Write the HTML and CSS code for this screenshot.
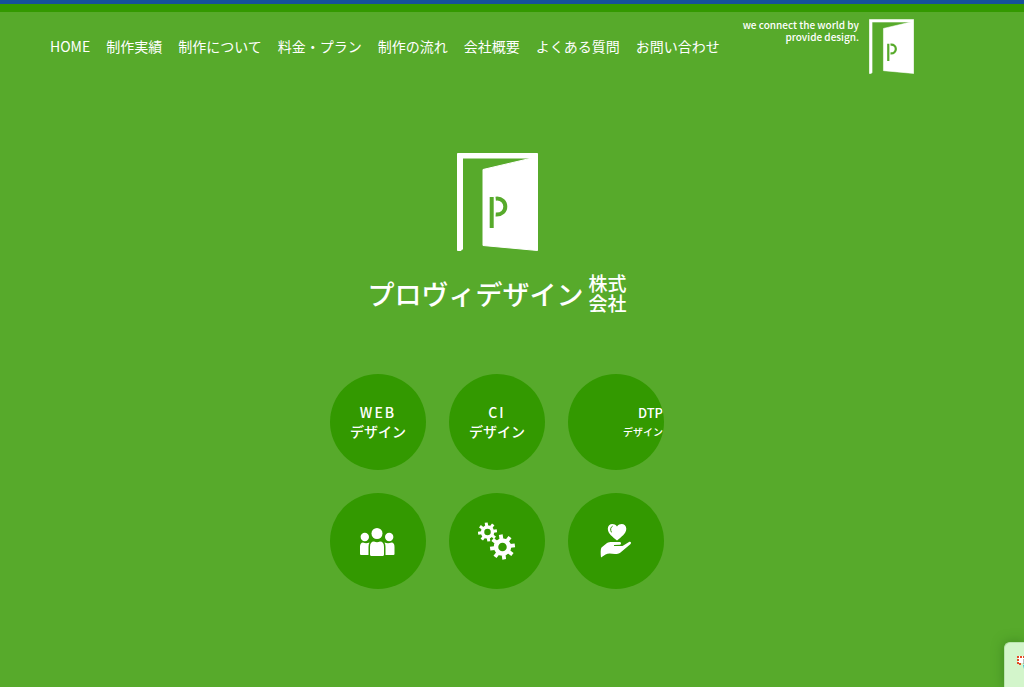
FILE: index.html
```html
<!DOCTYPE html>
<html lang="ja">
<head>
<meta charset="utf-8">
<meta name="viewport" content="width=device-width, initial-scale=1">
<title>プロヴィデザイン株式会社</title>
<link rel="stylesheet" href="styles.css">
</head>
<body>
<svg class="defs" aria-hidden="true">
  <symbol id="door" viewBox="0 0 81 98">
    <path fill="#fff" stroke="#fff" stroke-linejoin="round" d="M.5.5H80.500V97.500L26 92.500V16.500L75 5H5.500V96L4 97.500H.5Z"/>
    <path class="handle" d="M34.700 44V75M38.700 45.700C45 45 48.300 49 48.300 53.500S45 62 38.700 61.500"/>
  </symbol>
</svg>
<header class="header">
  <nav class="nav" aria-label="メイン">
    <a href="#home">HOME</a>
    <a href="#works">制作実績</a>
    <a href="#about">制作について</a>
    <a href="#price">料金・プラン</a>
    <a href="#flow">制作の流れ</a>
    <a href="#company">会社概要</a>
    <a href="#faq">よくある質問</a>
    <a href="#contact">お問い合わせ</a>
  </nav>
  <div class="brand">
    <p class="tagline">we connect the world by<br>provide design.</p>
    <svg class="brand-mark" aria-hidden="true"><use href="#door"/></svg>
  </div>
</header>
<main class="hero">
  <svg class="hero-mark" aria-hidden="true"><use href="#door"/></svg>
  <h1 class="wordmark"><span>プロヴィデザイン</span><small><span>株式</span><span>会社</span></small></h1>
  <div class="services">
    <a class="circle" href="#web"><span class="latin">WEB</span><span>デザイン</span></a>
    <a class="circle" href="#ci"><span class="latin">CI</span><span>デザイン</span></a>
    <a class="circle sliding" href="#dtp"><span>DTP</span><span class="sliding-label">デザイン</span></a>
    <a class="circle" href="#team" aria-label="チーム">
      <svg class="icon" viewBox="0 0 48 48" fill="#fff" aria-hidden="true">
        <circle cx="23" cy="16.500" r="5.500"/><circle cx="10.800" cy="20" r="4.200"/><circle cx="35.200" cy="20" r="4.200"/>
        <path d="M16 37.500V30Q16 24.500 20 24.500Q23 26 26 24.500Q30 24.500 30 30V37.500Q30 39 28.500 39H17.500Q16 39 16 37.500ZM6 37V30Q6 25.500 9 25.500Q12 27 15.500 25.500Q14.500 27 14.500 30V38H7Q6 38 6 37ZM40.500 37V30Q40.500 25.500 37.500 25.500Q34 27 30.500 25.500Q31.500 27 31.500 30V38H39.500Q40.500 38 40.500 37Z"/>
      </svg>
    </a>
    <a class="circle" href="#system" aria-label="システム">
      <svg class="icon" viewBox="0 0 48 48" fill="none" stroke="#fff" aria-hidden="true">
        <g transform="translate(14.500 15)">
          <circle r="5" stroke-width="3.500"/>
          <path stroke-width="3" d="M0-6V-9.500M4.200-4.200L6.700-6.700M6 0H9.500M4.200 4.200L6.700 6.700M0 6V9.500M-4.200 4.200L-6.700 6.700M-6 0H-9.500M-4.200-4.200L-6.700-6.700" transform="rotate(-8)"/>
        </g>
        <g transform="translate(29.500 30)">
          <circle r="6.500" stroke-width="4.500"/>
          <path stroke-width="3.800" d="M0-8V-12.500M5.600-5.600L8.800-8.800M8 0H12.500M5.600 5.600L8.800 8.800M0 8V12.500M-5.600 5.600L-8.800 8.800M-8 0H-12.500M-5.600-5.600L-8.800-8.800" transform="rotate(-8)"/>
        </g>
      </svg>
    </a>
    <a class="circle" href="#support" aria-label="サポート">
      <svg class="icon" viewBox="0 0 48 48" fill="#fff" aria-hidden="true">
        <path d="M25 23.500C21 20 15.800 17 15.800 11.800C15.800 6.500 22 5.500 25 9.500C28 5.500 34.300 6.500 34.300 11.800C34.300 17 29 20 25 23.500Z"/>
        <path fill="none" stroke="#390" stroke-linecap="round" d="M20.300 9.300Q17.300 11 19.300 15"/>
        <path d="M9 40.500C8.500 36 8.500 32 9.500 30.500L15 26C16.500 25 18 25 19.500 25H27.500C29.500 25 29.500 27.700 27.500 27.800L22 28V29H30.500L37 25C38.800 24.200 39.800 26 38.300 27.300L28.500 35.500C27 36.800 25 37 23 37C19 36.500 16 36 13.500 37.500Z"/>
      </svg>
    </a>
  </div>
</main>
<button class="capture" type="button" aria-label="キャプチャ">
  <svg viewBox="0 0 14 14" width="14" height="14" aria-hidden="true">
    <path fill="#fff" d="M1 1H13V8H1Z"/>
    <path fill="none" stroke="#e34b27" stroke-width="2" stroke-dasharray="2 1" d="M14 2H1V9H5"/>
    <path fill="none" stroke="#777" d="M7 4V9L10 8"/>
    <path fill="#39bdd8" d="M6 10L9 9L14 11V14H7Z"/>
  </svg>
</button>
</body>
</html>
```
FILE: styles.css
```css
* {
  box-sizing: border-box;
}

body {
  min-height: 100vh;
  margin: 0;
  border-top: 4px solid #15529a;
  background: #57aa2b;
  color: #fff;
  font-family: "Noto Sans CJK JP", sans-serif;
  overflow-x: hidden;
}

a {
  color: inherit;
  text-decoration: none;
}

.defs {
  position: absolute;
  width: 0;
  height: 0;
}

.handle {
  fill: none;
  stroke: #57aa2b;
  stroke-width: 4;
}

.header {
  display: flex;
  justify-content: space-between;
  align-items: flex-start;
  padding: 7px 110px 0 50px;
  border-top: 8px solid #390;
}

.nav {
  display: flex;
  gap: 16px;
  padding-top: 17px;
  font-size: 14px;
  line-height: 20px;
  white-space: nowrap;
}

.brand {
  display: flex;
  gap: 10px;
}

.tagline {
  margin: 0;
  font-size: 10px;
  font-weight: 500;
  line-height: 12px;
  text-align: right;
  white-space: nowrap;
}

.brand-mark {
  width: 45px;
  height: 55px;
}

.hero {
  display: flex;
  flex-direction: column;
  align-items: center;
  padding: 79px 30px 90px 0;
}

.hero-mark {
  width: 81px;
  height: 98px;
}

.wordmark {
  display: flex;
  align-items: center;
  gap: 5px;
  height: 44px;
  margin: 20px 0 0;
  font-size: 27px;
  font-weight: 500;
  white-space: nowrap;
}

.wordmark small {
  display: grid;
  font-size: 19px;
  line-height: 20px;
}

.services {
  display: grid;
  grid-template-columns: repeat(3, 96px);
  gap: 23px;
  margin-top: 59px;
}

.circle {
  display: flex;
  flex-direction: column;
  align-items: center;
  justify-content: center;
  height: 96px;
  border-radius: 50%;
  background: #390;
  font-size: 14px;
  font-weight: 500;
  line-height: 19px;
  white-space: nowrap;
  overflow: hidden;
}

.latin {
  letter-spacing: 2px;
}

.sliding {
  align-items: flex-end;
  padding-right: 1px;
  font-size: 13px;
}

.sliding-label {
  font-size: 10px;
}

.icon {
  width: 48px;
  height: 48px;
}

.capture {
  display: flex;
  align-items: flex-start;
  position: fixed;
  right: 0;
  bottom: 0;
  width: 20px;
  height: 45px;
  padding: 12px 0 0 12px;
  border: 1px solid #b9e3ae;
  border-width: 1px 0 0 1px;
  border-radius: 6px 0 0;
  background: #d3f5cb;
  box-shadow: 0 0 12px #28651a80;
  overflow: hidden;
}

.capture svg {
  flex: none;
}
```
